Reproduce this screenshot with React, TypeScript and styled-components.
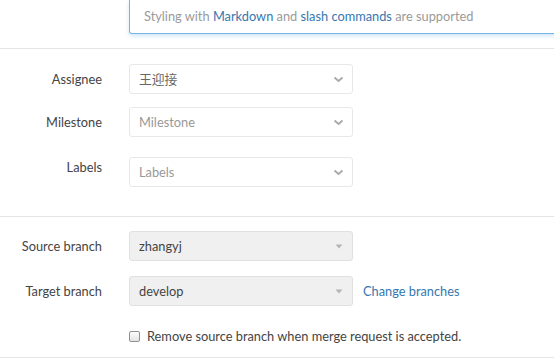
import React from "react";
import styled, { createGlobalStyle } from "styled-components";

const Global = createGlobalStyle`
  html, body {
    margin: 0;
    padding: 0;
    background: #fff;
    overflow: hidden;
  }
  body {
    font-family: Lato, "Noto Sans CJK SC", sans-serif;
    font-size: 12.8px;
    color: #444;
  }
`;

const Page = styled.div`
  width: 554px;
`;

const Section = styled.div<{ $pt: number; $pb: number }>`
  padding-top: ${(p) => p.$pt}px;
  padding-bottom: ${(p) => p.$pb}px;
  border-bottom: 1px solid #e5e5e5;
  display: flex;
  flex-direction: column;
`;

const Row = styled.div<{ $mt?: number }>`
  display: grid;
  grid-template-columns: 129px 224px 1fr;
  align-items: center;
  margin-top: ${(p) => p.$mt ?? 0}px;
`;

const Label = styled.div<{ $top?: boolean }>`
  padding-right: 27px;
  text-align: right;
  line-height: 20px;
  color: #444;
  align-self: ${(p) => (p.$top ? "start" : "center")};
`;

const EditorTail = styled.div`
  grid-column: 2 / -1;
  margin-right: -8px;
  height: 34px;
  box-sizing: border-box;
  border: 1px solid #74b3e6;
  border-top: none;
  border-radius: 0 0 3px 3px;
  box-shadow: 0 2px 4px rgba(120, 180, 235, 0.35);
  padding: 6px 0 0 14px;
  line-height: 20px;
  color: #9a9a9a;
`;

const Link = styled.a`
  color: #3777b0;
  text-decoration: none;
`;

const SelectBox = styled.div<{ $disabled?: boolean }>`
  height: 30px;
  box-sizing: border-box;
  border: 1px solid ${(p) => (p.$disabled ? "#e0e0e0" : "#e8e8e8")};
  border-radius: 3px;
  background: ${(p) => (p.$disabled ? "#f0f0f0" : "#fff")};
  display: flex;
  align-items: center;
  justify-content: space-between;
  padding: 0 8px 0 9px;
`;

const SelectText = styled.span<{ $placeholder?: boolean; $strong?: boolean }>`
  line-height: 20px;
  color: ${(p) => (p.$placeholder ? "#999" : p.$strong ? "#444" : "#666")};
`;

const SideLink = styled(Link)`
  margin-left: 10px;
  line-height: 20px;
`;

const CheckRow = styled.label`
  grid-column: 2 / -1;
  display: flex;
  align-items: center;
  gap: 7px;
  line-height: 20px;
  color: #444;
`;

const CheckBox = styled.span`
  width: 11px;
  height: 11px;
  border: 1px solid #909090;
  border-radius: 2px;
  background: linear-gradient(#fdfdfd, #e4e4e4);
  box-sizing: border-box;
  flex: none;
`;

const Chevron = () => (
  <svg width="11" height="7" viewBox="0 0 11 7">
    <polyline points="1.5,1.5 5.5,5 9.5,1.5" fill="none" stroke="#a8a8a8" strokeWidth="1.8" />
  </svg>
);

const Caret = () => (
  <svg width="10" height="5" viewBox="0 0 10 5">
    <polygon points="1.5,0.5 8.5,0.5 5,4.5" fill="#b5b5b5" />
  </svg>
);

const Select: React.FC<{ text: string; placeholder?: boolean }> = ({ text, placeholder }) => (
  <SelectBox>
    <SelectText $placeholder={placeholder}>{text}</SelectText>
    <Chevron />
  </SelectBox>
);

const BranchSelect: React.FC<{ text: string }> = ({ text }) => (
  <SelectBox $disabled>
    <SelectText $strong>{text}</SelectText>
    <Caret />
  </SelectBox>
);

export default function App() {
  return (
    <Page>
      <Global />
      <Section $pt={0} $pb={14}>
        <Row>
          <EditorTail>
            Styling with <Link>Markdown</Link> and <Link>slash commands</Link> are supported
          </EditorTail>
        </Row>
      </Section>
      <Section $pt={15} $pb={29}>
        <Row>
          <Label>Assignee</Label>
          <Select text="王迎接" />
        </Row>
        <Row $mt={13}>
          <Label>Milestone</Label>
          <Select text="Milestone" placeholder />
        </Row>
        <Row $mt={20}>
          <Label $top>Labels</Label>
          <Select text="Labels" placeholder />
        </Row>
      </Section>
      <Section $pt={14} $pb={11}>
        <Row>
          <Label>Source branch</Label>
          <BranchSelect text="zhangyj" />
        </Row>
        <Row $mt={15}>
          <Label>Target branch</Label>
          <BranchSelect text="develop" />
          <SideLink>Change branches</SideLink>
        </Row>
        <Row $mt={20}>
          <CheckRow>
            <CheckBox />
            Remove source branch when merge request is accepted.
          </CheckRow>
        </Row>
      </Section>
    </Page>
  );
}
